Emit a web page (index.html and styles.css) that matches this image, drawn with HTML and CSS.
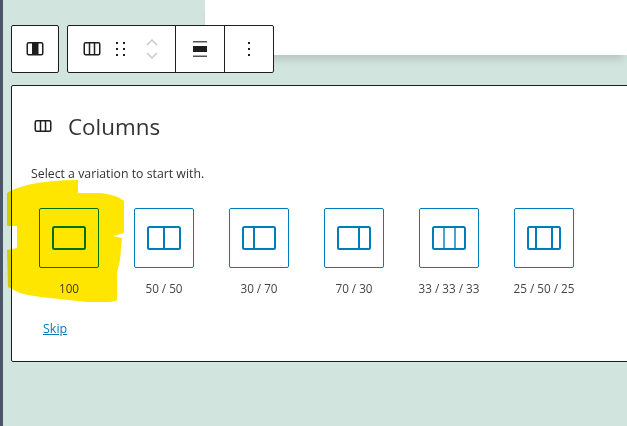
FILE: index.html
```html
<!DOCTYPE html>
<html>
<head>
    <title>Columns</title>
    <link rel="stylesheet" href="styles.css">
</head>
<body>
    <div class="top-panel"></div>

    <div class="toolbar">
        <div class="tool-group">
            <button class="tool">
                <svg width="24" height="24" viewBox="0 0 24 24"><rect x="4.25" y="5.75" width="15.5" height="12" rx="1.5" fill="#fff" stroke="#1e1e1e" stroke-width="1.5"/><rect x="9" y="6" width="6.5" height="11.5" fill="#1e1e1e"/></svg>
            </button>
        </div>
        <div class="tool-group">
            <button class="tool tool-columns">
                <svg width="24" height="24" viewBox="0 0 24 24" fill="none" stroke="#1e1e1e" stroke-width="1.5"><rect x="4.25" y="5.75" width="15.5" height="12" rx="1.5"/><path d="M9.5 6v11.5M14.5 6v11.5"/></svg>
            </button>
            <button class="tool tool-drag">
                <svg width="10" height="16" viewBox="0 0 10 16" fill="#1e1e1e"><rect x="0" y="1" width="2" height="2"/><rect x="7" y="1" width="2" height="2"/><rect x="0" y="7" width="2" height="2"/><rect x="7" y="7" width="2" height="2"/><rect x="0" y="13" width="2" height="2"/><rect x="7" y="13" width="2" height="2"/></svg>
            </button>
            <div class="movers">
                <svg width="12" height="8" viewBox="0 0 12 8" fill="none" stroke="#c8c8c8" stroke-width="1.5"><path d="M1 7l5-5 5 5"/></svg>
                <svg width="12" height="8" viewBox="0 0 12 8" fill="none" stroke="#c8c8c8" stroke-width="1.5"><path d="M1 1l5 5 5-5"/></svg>
            </div>
            <button class="tool tool-align">
                <svg width="14" height="16" viewBox="0 0 14 16"><rect y="0" width="14" height="1.5" fill="#555"/><rect y="5" width="14" height="6" fill="#1e1e1e"/><rect y="14.5" width="14" height="1.5" fill="#555"/></svg>
            </button>
            <button class="tool tool-more">
                <svg width="4" height="16" viewBox="0 0 4 16" fill="#1e1e1e"><rect x="1" y="1" width="2" height="2"/><rect x="1" y="7" width="2" height="2"/><rect x="1" y="13" width="2" height="2"/></svg>
            </button>
        </div>
    </div>

    <div class="placeholder">
        <div class="title">
            <svg width="24" height="24" viewBox="0 0 24 24" fill="none" stroke="#1e1e1e" stroke-width="1.5"><rect x="4.25" y="6.75" width="15.5" height="10.5" rx="1.5"/><path d="M9.5 7v10M14.5 7v10"/></svg>
            <span>Columns</span>
        </div>
        <p class="instructions">Select a variation to start with.</p>

        <ul class="variations">
            <li>
                <div class="variation"><svg width="36" height="26" viewBox="0 0 36 26" class="var-icon"><rect x="2" y="2" width="32" height="22" rx="1.5"/></svg></div>
                <span>100</span>
            </li>
            <li>
                <div class="variation"><svg width="36" height="26" viewBox="0 0 36 26" class="var-icon"><rect x="2" y="2" width="32" height="22" rx="1.5"/><path d="M18 2v22"/></svg></div>
                <span>50 / 50</span>
            </li>
            <li>
                <div class="variation"><svg width="36" height="26" viewBox="0 0 36 26" class="var-icon"><rect x="2" y="2" width="32" height="22" rx="1.5"/><path d="M13 2v22"/></svg></div>
                <span>30 / 70</span>
            </li>
            <li>
                <div class="variation"><svg width="36" height="26" viewBox="0 0 36 26" class="var-icon"><rect x="2" y="2" width="32" height="22" rx="1.5"/><path d="M23 2v22"/></svg></div>
                <span>70 / 30</span>
            </li>
            <li>
                <div class="variation"><svg width="36" height="26" viewBox="0 0 36 26" class="var-icon"><rect x="2" y="2" width="32" height="22" rx="1.5"/><path class="thin" d="M13 2v22M24 2v22"/></svg></div>
                <span>33 / 33 / 33</span>
            </li>
            <li>
                <div class="variation"><svg width="36" height="26" viewBox="0 0 36 26" class="var-icon"><rect x="2" y="2" width="32" height="22" rx="1.5"/><path d="M10 2v22M26 2v22"/></svg></div>
                <span>25 / 50 / 25</span>
            </li>
        </ul>

        <a class="skip" href="#">Skip</a>
    </div>

    <!-- yellow marker scribble on top of the first option -->
    <svg class="scribble" width="130" height="130" viewBox="0 0 130 130">
        <path d="M78 0 L78 13 L100 13 Q118 15 124 21 L124 53 L113 56 L122 58 L120 80 L117 93 L117 120 Q116 122 105 122 L87 122 L50 118 Q30 116 20 113 L8 107 L7 70 L17 68 L17 46 L7 46 L7 13 Q15 8 27 5 Q50 0 78 0 Z"/>
    </svg>
</body>
</html>
```

FILE: styles.css
```css
* {
    box-sizing: border-box;
}

html, body {
    height: 100%;
}

body {
    margin: 0;
    padding: 25px 0 0 8px;
    overflow: hidden;
    font-family: "Open Sans", "Noto Sans", sans-serif;
    color: #1e1e1e;
    background-color: #d2e4de;
    border-left: 3px solid #4b5565;
}

.top-panel {
    position: absolute;
    top: 0;
    left: 205px;
    right: 0;
    height: 55px;
    background-color: #fff;
    box-shadow: 0 8px 8px -4px rgba(0, 0, 0, 0.14);
}

.toolbar {
    position: relative;
    display: flex;
    gap: 8px;
    height: 48px;
}

.tool-group {
    display: flex;
    background-color: #fff;
    border: 1px solid #1e1e1e;
    border-radius: 2px;
}

.tool {
    display: flex;
    align-items: center;
    justify-content: center;
    width: 46px;
    padding: 0;
    border: none;
    background: none;
}

.tool-columns {
    width: 35px;
    margin-left: 6px;
}

.tool-drag {
    width: 24px;
}

.movers {
    display: flex;
    flex-direction: column;
    align-items: center;
    justify-content: center;
    gap: 6px;
    width: 38px;
    margin-right: 4px;
}

.tool-align {
    width: 49px;
    border-left: 1px solid #1e1e1e;
}

.tool-more {
    width: 49px;
    border-left: 1px solid #1e1e1e;
}

.placeholder {
    position: relative;
    width: 640px;
    height: 277px;
    margin-top: 12px;
    padding: 25px 19px 0;
    background-color: #fff;
    border: 1px solid #1e1e1e;
    border-radius: 2px 0 0 2px;
}

.title {
    display: flex;
    align-items: center;
    gap: 13px;
    height: 30px;
    font-size: 22.4px;
    color: #333;
}

.instructions {
    margin: 24px 0 0;
    font-size: 12.3px;
    line-height: 18px;
    color: #333;
}

.variations {
    display: flex;
    gap: 35px;
    margin: 25px 0 0 8px;
    padding: 0;
    list-style: none;
}

.variations li {
    display: flex;
    flex-direction: column;
    align-items: center;
    width: 60px;
    font-size: 11.7px;
    white-space: nowrap;
    color: #444;
}

.variations span {
    margin-top: 12px;
    line-height: 16px;
}

.variation {
    display: flex;
    align-items: center;
    justify-content: center;
    width: 60px;
    height: 60px;
    background-color: #fff;
    border: 1px solid #007cba;
    border-radius: 2px;
}

.var-icon {
    fill: none;
    stroke: #007cba;
    stroke-width: 2;
}

.var-icon .thin {
    stroke-width: 1.4;
}

.skip {
    display: inline-block;
    margin: 24px 0 0 12px;
    font-size: 12.5px;
    line-height: 18px;
    color: #007cba;
}

.scribble {
    position: absolute;
    top: 180px;
    left: 0;
    fill: #ffe600;
    mix-blend-mode: multiply;
    pointer-events: none;
}
```
